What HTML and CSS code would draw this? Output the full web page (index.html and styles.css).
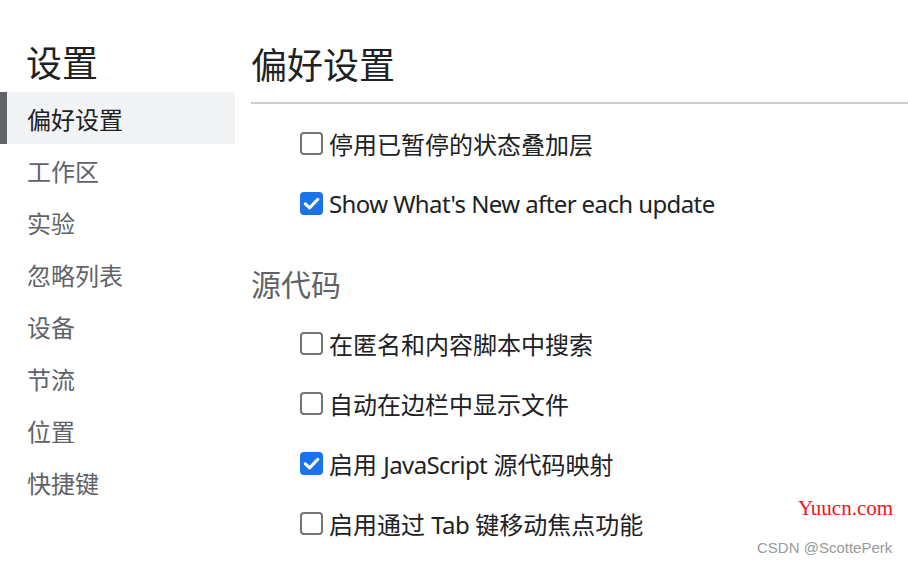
FILE: index.html
```html
<!DOCTYPE html>
<html lang="zh-CN">
<head>
<meta charset="utf-8">
<title>设置</title>
<link rel="stylesheet" href="styles.css">
</head>
<body>
<div class="app">
  <nav class="sidebar">
    <div class="side-title">设置</div>
    <ul class="nav-list">
      <li class="nav-item active">偏好设置</li>
      <li class="nav-item">工作区</li>
      <li class="nav-item">实验</li>
      <li class="nav-item">忽略列表</li>
      <li class="nav-item">设备</li>
      <li class="nav-item">节流</li>
      <li class="nav-item">位置</li>
      <li class="nav-item">快捷键</li>
    </ul>
  </nav>
  <main class="content">
    <h1 class="page-title">偏好设置</h1>
    <div class="rows first">
      <label class="row"><span class="box"></span><span class="label">停用已暂停的状态叠加层</span></label>
      <label class="row"><span class="box checked"><svg viewBox="0 0 24 24" width="23" height="23"><path d="M5.5 12.3 L10 16.6 L18.6 7.6" fill="none" stroke="#fff" stroke-width="3.2" stroke-linecap="round" stroke-linejoin="round"/></svg></span><span class="label"><span class="en">Show What's New after each update</span></span></label>
    </div>
    <h2 class="section-title">源代码</h2>
    <div class="rows">
      <label class="row"><span class="box"></span><span class="label">在匿名和内容脚本中搜索</span></label>
      <label class="row"><span class="box"></span><span class="label">自动在边栏中显示文件</span></label>
      <label class="row"><span class="box checked"><svg viewBox="0 0 24 24" width="23" height="23"><path d="M5.5 12.3 L10 16.6 L18.6 7.6" fill="none" stroke="#fff" stroke-width="3.2" stroke-linecap="round" stroke-linejoin="round"/></svg></span><span class="label">启用 <span class="en">JavaScript</span> 源代码映射</span></label>
      <label class="row"><span class="box"></span><span class="label">启用通过 <span class="en">Tab</span> 键移动焦点功能</span></label>
    </div>
  </main>
</div>
<div class="wm-site">Yuucn.com</div>
<div class="wm-author">CSDN @ScottePerk</div>
</body>
</html>
```
FILE: styles.css
```css
* { box-sizing: border-box; }
html, body { margin: 0; padding: 0; }
body {
  width: 908px;
  height: 564px;
  overflow: hidden;
  background: #fff;
  font-family: "Noto Sans", "Noto Sans CJK SC", sans-serif;
  color: #202124;
  position: relative;
}
.app { display: flex; height: 100%; }
.sidebar { width: 235px; flex: none; padding-top: 41px; }
.side-title {
  font-size: 36px;
  line-height: 46px;
  height: 46px;
  margin-bottom: 5px;
  padding-left: 26px;
  color: #202124;
}
.nav-list { list-style: none; margin: 0; padding: 0; }
.nav-item {
  height: 52px;
  line-height: 56px;
  font-size: 24px;
  padding-left: 27px;
  color: #5f6368;
}
.nav-item.active {
  background: #f1f3f4;
  color: #202124;
  border-left: 7px solid #5f6368;
  padding-left: 20px;
}
.content { flex: 1; padding-left: 16px; padding-top: 40px; }
.page-title {
  margin: 0;
  font-weight: normal;
  font-size: 36px;
  line-height: 52px;
  padding-bottom: 10px;
  border-bottom: 2px solid #cbcdd1;
}
.rows { padding-left: 49px; }
.rows.first { padding-top: 9px; }
.row {
  display: flex;
  align-items: center;
  height: 60px;
  font-size: 24px;
  color: #202124;
}
.en { letter-spacing: -0.6px; }
.box {
  width: 23px;
  height: 23px;
  border: 2px solid #767676;
  border-radius: 4px;
  margin-right: 6px;
  flex: none;
  display: flex;
  align-items: center;
  justify-content: center;
}
.box.checked { background: #1a73e8; border-color: #1a73e8; }
.box svg { display: block; flex: none; }
.section-title {
  margin: 0;
  padding-top: 24px;
  font-weight: normal;
  font-size: 30px;
  line-height: 56px;
  color: #5f6368;
}
.wm-site {
  position: absolute;
  left: 798px;
  top: 496px;
  font-family: "Liberation Serif", serif;
  font-size: 21px;
  color: #f0141e;
}
.wm-author {
  position: absolute;
  left: 757px;
  top: 539px;
  font-family: "Liberation Sans", sans-serif;
  font-size: 15px;
  color: #9a9a9a;
}
```
